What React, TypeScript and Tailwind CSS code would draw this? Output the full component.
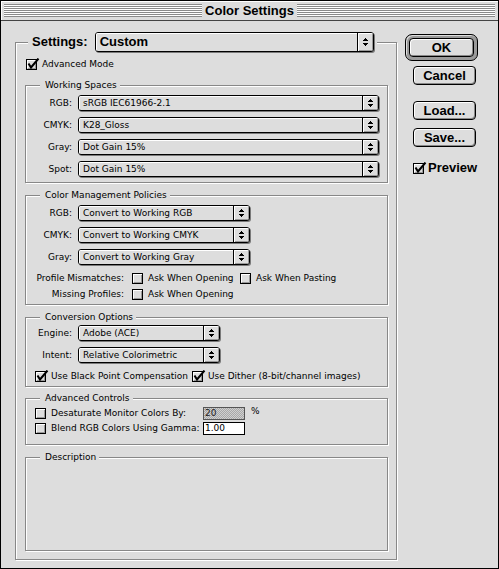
import type { ReactNode } from 'react';

const small = "font-['DejaVu_Sans',sans-serif] text-[9px] leading-[12px]";
const heavy = "font-['Liberation_Sans',Arial,sans-serif] font-bold text-[13px] leading-[16px]";

// stacked up/down arrows of a popup menu
function Arrows() {
  return (
    <svg width="5" height="8" viewBox="0 0 5 8" shapeRendering="crispEdges">
      <rect x="2" y="0" width="1" height="1" />
      <rect x="1" y="1" width="3" height="1" />
      <rect x="0" y="2" width="5" height="1" />
      <rect x="0" y="5" width="5" height="1" />
      <rect x="1" y="6" width="3" height="1" />
      <rect x="2" y="7" width="1" height="1" />
    </svg>
  );
}

function Popup({ value, className, large }: { value: string; className: string; large?: boolean }) {
  return (
    <div
      className={`flex ${large ? 'h-[20px]' : 'h-[16px]'} ${className} shrink-0 overflow-hidden rounded-[3px] border border-black bg-[#dddddd] shadow-[1px_1px_0_#7a7a7a]`}
    >
      <div
        className={`flex flex-1 items-center pl-[4px] shadow-[inset_1px_1px_0_#fff] ${large ? heavy : small}`}
      >
        {value}
      </div>
      <div className="flex w-[16px] items-center justify-center border-l border-black shadow-[inset_1px_1px_0_#fff,inset_-1px_-1px_0_#999]">
        <Arrows />
      </div>
    </div>
  );
}

function CheckBox({ checked }: { checked?: boolean }) {
  return (
    <svg width="14" height="13" viewBox="0 0 14 13" className="shrink-0">
      <g shapeRendering="crispEdges">
        <rect x="0.5" y="1.5" width="10" height="10" fill="#dddddd" stroke="#000" />
        <path d="M1.5 10V2.5H10" stroke="#fff" fill="none" />
        <path d="M2 10.5H9.5V3" stroke="#999" fill="none" />
      </g>
      {checked && <path d="M2.5 5.5L5 9.5L12.5 0.5" stroke="#000" strokeWidth="2" fill="none" />}
    </svg>
  );
}

function Check({ label, checked, className = '' }: { label: string; checked?: boolean; className?: string }) {
  return (
    <div className={`flex items-center gap-[2px] ${className}`}>
      <CheckBox checked={checked} />
      <span>{label}</span>
    </div>
  );
}

function Group({ title, className = '', children }: { title: ReactNode; className?: string; children?: ReactNode }) {
  return (
    <fieldset
      className={`min-w-0 border border-[#888888] shadow-[inset_1px_1px_0_#fff,1px_1px_0_#fff] ${className}`}
    >
      <legend className="ml-[14px] bg-[#dddddd] pl-[5px] pr-[3px] leading-[12px]">{title}</legend>
      {children}
    </fieldset>
  );
}

function Row({ label, children, labelWidth = 'w-[46px]' }: { label: string; children: ReactNode; labelWidth?: string }) {
  return (
    <div className="flex items-center gap-[6px]">
      <span className={`${labelWidth} shrink-0 text-right`}>{label}</span>
      {children}
    </div>
  );
}

function Button({ label }: { label: string }) {
  return (
    <div
      className={`flex h-[19px] w-[63px] items-center justify-center rounded-[4px] border border-black bg-[#dddddd] shadow-[inset_1px_1px_0_#fff,inset_-1px_-1px_0_#888] ${heavy}`}
    >
      {label}
    </div>
  );
}

export default function App() {
  const stripes =
    'h-[13px] flex-1 bg-[repeating-linear-gradient(to_bottom,#8a8a8a_0px,#8a8a8a_1px,#ffffff_1px,#ffffff_2px)]';

  return (
    <div className={`h-[569px] w-[499px] overflow-hidden border border-black bg-[#dddddd] text-black ${small}`}>
      {/* title bar */}
      <div className="flex h-[20px] items-center gap-[3px] border-b border-[#444] px-[3px] shadow-[inset_1px_1px_0_#fff]">
        <div className={stripes} />
        <span className={heavy}>Color Settings</span>
        <div className={stripes} />
      </div>

      <div className="flex">
        <fieldset className="ml-[14px] mt-[11px] w-[382px] border border-[#888888] pb-[8px] shadow-[inset_1px_1px_0_#fff,1px_1px_0_#fff]">
          <legend className="ml-[12px] flex h-[20px] items-center gap-[7px] bg-[#dddddd] pl-[4px] pr-[3px]">
            <span className={heavy}>Settings:</span>
            <Popup value="Custom" className="w-[279px]" large />
          </legend>

          <Check label="Advanced Mode" checked className="ml-[10px] mt-[5px] h-[14px]" />

          <Group title="Working Spaces" className="ml-[9px] mr-[8px] mt-[8px] pb-[5px]">
            <div className="mt-[4px] flex flex-col gap-[6px]">
              <Row label="RGB:">
                <Popup value="sRGB IEC61966-2.1" className="w-[301px]" />
              </Row>
              <Row label="CMYK:">
                <Popup value="K28_Gloss" className="w-[301px]" />
              </Row>
              <Row label="Gray:">
                <Popup value="Dot Gain 15%" className="w-[301px]" />
              </Row>
              <Row label="Spot:">
                <Popup value="Dot Gain 15%" className="w-[301px]" />
              </Row>
            </div>
          </Group>

          <Group title="Color Management Policies" className="ml-[9px] mr-[8px] mt-[6px] pb-[2px]">
            <div className="mt-[4px] flex flex-col gap-[6px]">
              <Row label="RGB:">
                <Popup value="Convert to Working RGB" className="w-[172px]" />
              </Row>
              <Row label="CMYK:">
                <Popup value="Convert to Working CMYK" className="w-[172px]" />
              </Row>
              <Row label="Gray:">
                <Popup value="Convert to Working Gray" className="w-[172px]" />
              </Row>
            </div>
            <div className="mt-[5px] flex h-[16px] items-center">
              <span className="w-[98px] text-right">Profile Mismatches:</span>
              <Check label="Ask When Opening" className="ml-[8px] w-[108px]" />
              <Check label="Ask When Pasting" />
            </div>
            <div className="flex h-[16px] items-center">
              <span className="w-[98px] text-right">Missing Profiles:</span>
              <Check label="Ask When Opening" className="ml-[8px]" />
            </div>
          </Group>

          <Group title="Conversion Options" className="ml-[9px] mr-[8px] mt-[6px] pb-[3px]">
            <div className="mt-[2px] flex flex-col gap-[6px]">
              <Row label="Engine:">
                <Popup value="Adobe (ACE)" className="w-[142px]" />
              </Row>
              <Row label="Intent:">
                <Popup value="Relative Colorimetric" className="w-[142px]" />
              </Row>
            </div>
            <div className="mt-[6px] flex h-[14px] items-center pl-[9px]">
              <Check label="Use Black Point Compensation" checked className="w-[157px]" />
              <Check label="Use Dither (8-bit/channel images)" checked />
            </div>
          </Group>

          <Group title="Advanced Controls" className="ml-[9px] mr-[8px] mt-[5px] pb-[9px]">
            <div className="mt-[2px] flex flex-col pl-[9px]">
              <div className="flex h-[14px] items-center">
                <Check label="Desaturate Monitor Colors By:" className="w-[168px]" />
                <div className="flex h-[13px] w-[42px] items-center border border-[#555] bg-[repeating-conic-gradient(#a8a8a8_0_25%,#d0d0d0_0_50%)] bg-[length:2px_2px] pl-[1px] text-[#222]">
                  20
                </div>
                <span className="ml-[6px] -mt-[4px]">%</span>
              </div>
              <div className="mt-[1px] flex h-[14px] items-center">
                <Check label="Blend RGB Colors Using Gamma:" className="w-[168px]" />
                <div className="flex h-[13px] w-[42px] items-center border border-black bg-white pl-[1px]">1.00</div>
              </div>
            </div>
          </Group>

          <Group title="Description" className="ml-[9px] mr-[8px] mt-[6px]">
            <div className="h-[87px]" />
          </Group>
        </fieldset>

        <div className="ml-[8px] mt-[13px] flex flex-col">
          <div className="w-[73px] rounded-[7px] border border-black bg-[#9a9a9a] p-[3px] shadow-[inset_1px_1px_0_#ddd]">
            <div
              className={`flex h-[19px] items-center justify-center rounded-[4px] border border-black bg-[#dddddd] shadow-[inset_1px_1px_0_#fff,inset_-1px_-1px_0_#888] ${heavy}`}
            >
              OK
            </div>
          </div>
          <div className="ml-[8px] mt-[5px]">
            <Button label="Cancel" />
          </div>
          <div className="ml-[8px] mt-[16px]">
            <Button label="Load..." />
          </div>
          <div className="ml-[8px] mt-[8px]">
            <Button label="Save..." />
          </div>
          <div className={`ml-[8px] mt-[13px] flex items-center gap-[1px] ${heavy}`}>
            <CheckBox checked />
            <span>Preview</span>
          </div>
        </div>
      </div>
    </div>
  );
}
